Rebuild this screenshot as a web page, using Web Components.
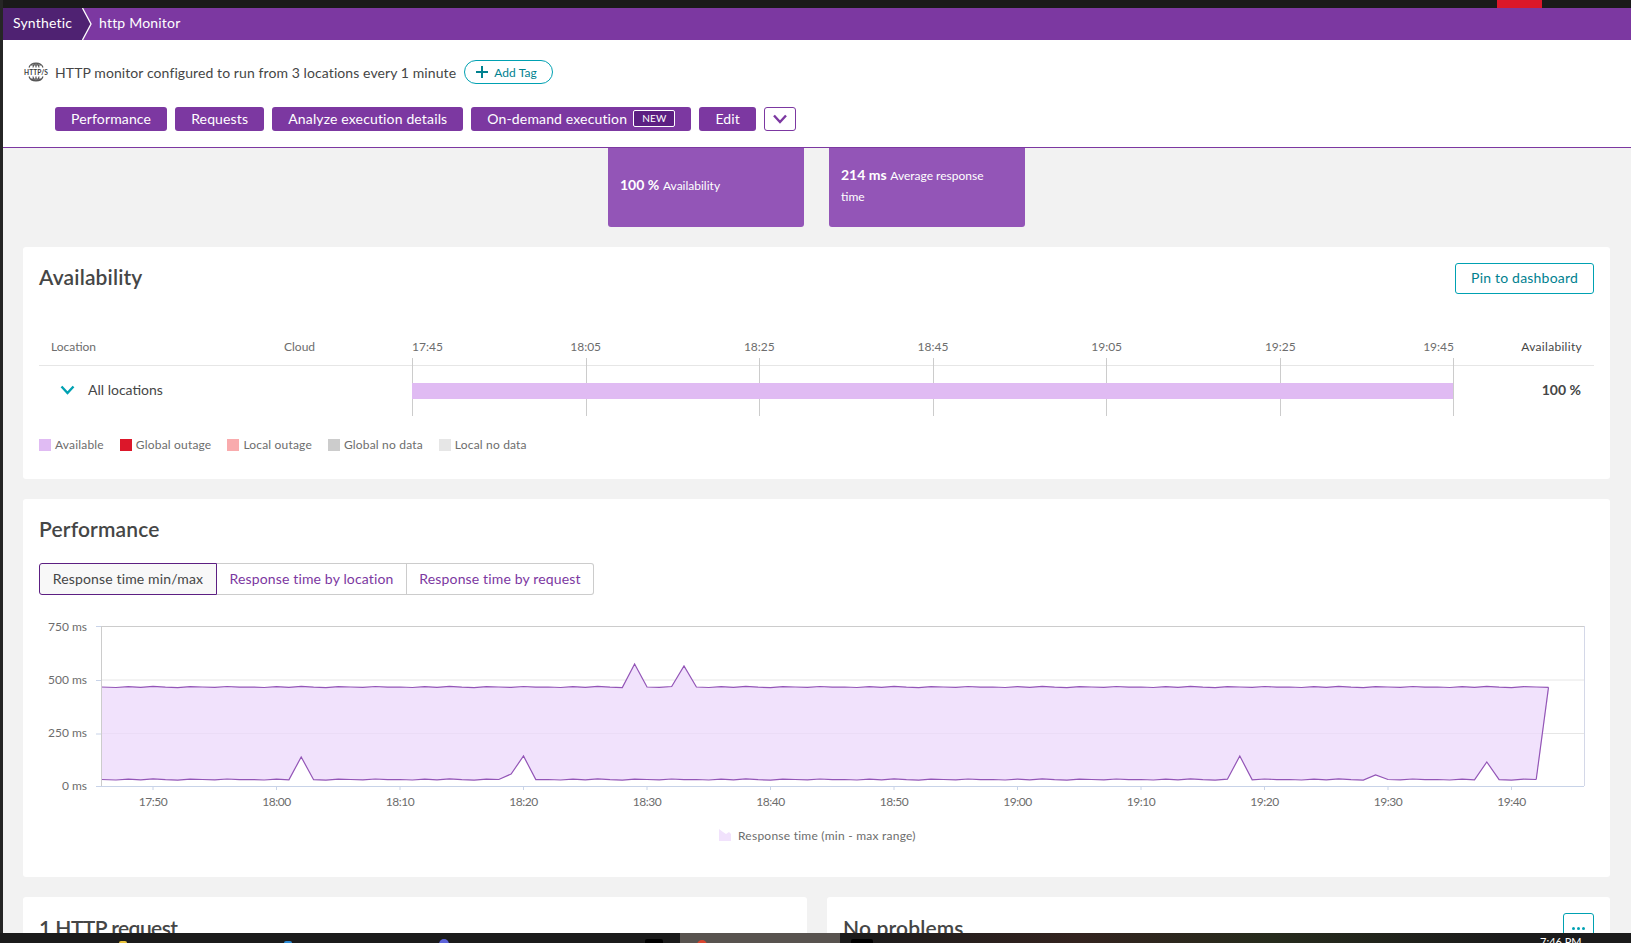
<!DOCTYPE html>
<html lang="en">
<head>
<meta charset="utf-8">
<title>http Monitor</title>
<style>
  html, body { margin: 0; height: 943px; overflow: hidden; background: #f2f2f2; }
  body { font-family: 'Lato', 'Liberation Sans', sans-serif; color: #454646; }
</style>
</head>
<body>
<mon-app></mon-app>

<script>
// Botón sólido de la cabecera
class MonButton extends HTMLElement {
  constructor() {
    super();
    this.attachShadow({ mode: 'open' }).innerHTML = `
      <style>
        :host { display: inline-flex; }
        .btn {
          display: flex; align-items: center; gap: 6px; box-sizing: border-box; height: 24px; padding: 0 16px 2px;
          background: #7c38a1; color: #fff; border-radius: 3px;
          font-size: 14px; letter-spacing: .15px; white-space: nowrap;
        }
      </style>
      <div class="btn"><slot></slot></div>`;
  }
}

class MonBreadcrumb extends HTMLElement {
  constructor() {
    super();
    this.attachShadow({ mode: 'open' }).innerHTML = `
      <style>
        :host { display: flex; height: 32px; background: #7c38a1; color: #fff; font-size: 14px; letter-spacing: .2px; }
        .first { display: flex; align-items: center; box-sizing: border-box; width: 79px; padding: 0 0 3px 10px; background: #4f2272; }
        .chev { display: block; width: 12px; height: 32px; margin-right: 5px; }
        .second { display: flex; align-items: center; padding-bottom: 3px; }
      </style>
      <div class="first"><slot name="root"></slot></div>
      <svg class="chev" viewBox="0 0 12 32">
        <path d="M0 0H1L9 16L1 32H0Z" fill="#4f2272"/>
        <path d="M0.500 0L9 16L0.500 32" fill="none" stroke="#fff" stroke-width="1.300"/>
      </svg>
      <div class="second"><slot></slot></div>`;
  }
}

class MonHeader extends HTMLElement {
  constructor() {
    super();
    this.attachShadow({ mode: 'open' }).innerHTML = `
      <style>
        :host { display: block; height: 107px; background: #fff; border-bottom: 1px solid #7c38a1; }
        .info { display: flex; align-items: center; height: 24px; padding: 20px 0 0 20px; font-size: 14px; letter-spacing: .09px; }
        .icon { width: 26px; height: 20px; margin-right: 6px; flex: none; }
        .tag {
          display: flex; align-items: center; gap: 5px; box-sizing: border-box; height: 24px; padding: 0 15px 0 10px;
          margin-left: 8px; border: 1px solid #00a1b2; border-radius: 12px; color: #00818f; font-size: 12px;
        }
        .tag svg { width: 14px; height: 14px; }
        .actions { display: flex; gap: 8px; margin: 23px 0 0 52px; }
        .more {
          display: flex; align-items: center; justify-content: center; box-sizing: border-box;
          width: 32px; height: 24px; border: 1px solid #7c38a1; border-radius: 3px;
        }
        .more svg { width: 16px; height: 10px; }
      </style>
      <div class="info">
        <svg class="icon" viewBox="0 0 26 20">
          <path d="M6 5.500C7 2.500 10 1 13 1S19 2.500 20 5.500M10 5.500C10.500 2.500 12 1 13 1S15.500 2.500 16 5.500M13 1V5.500M7.500 3H18.500" fill="none" stroke="#555" stroke-width="1.200"/>
          <path d="M6 14.500C7 17.500 10 19 13 19S19 17.500 20 14.500M10 14.500C10.500 17.500 12 19 13 19S15.500 17.500 16 14.500M13 19V14.500M7.500 17H18.500" fill="none" stroke="#555" stroke-width="1.200"/>
          <text x="13" y="12.700" text-anchor="middle" font-size="7.500" font-weight="700" fill="#3c3c3c" textLength="24" lengthAdjust="spacingAndGlyphs">HTTP/S</text>
        </svg>
        <slot></slot>
        <div class="tag">
          <svg viewBox="0 0 14 14"><path d="M7 1V13M1 7H13" stroke="#00818f" stroke-width="2"/></svg>
          Add Tag
        </div>
      </div>
      <div class="actions">
        <slot name="actions"></slot>
        <div class="more">
          <svg viewBox="0 0 16 10"><path d="M2 1.500L8 8L14 1.500" fill="none" stroke="#7c38a1" stroke-width="2.400"/></svg>
        </div>
      </div>`;
  }
}

class MonTile extends HTMLElement {
  constructor() {
    super();
    this.attachShadow({ mode: 'open' }).innerHTML = `
      <style>
        :host {
          display: block; box-sizing: border-box; width: 196px; height: 79px; padding: 16px 28px 0 12px;
          background: #9355b7; color: #fff; border-radius: 0 0 3px 3px; font-size: 12px; line-height: 21px;
        }
        :host([single]) { padding-top: 26px; }
        b { font-size: 14px; margin-right: 1px; }
      </style>
      <b>${this.getAttribute('value')}</b> <slot></slot>`;
  }
}

class MonCard extends HTMLElement {
  constructor() {
    super();
    this.attachShadow({ mode: 'open' }).innerHTML = `
      <style>
        :host { display: block; box-sizing: border-box; padding: 16px; background: #fff; border-radius: 3px; }
        .head { display: flex; align-items: flex-start; justify-content: space-between; min-height: 31px; }
        h2 { margin: 0; font-size: 21px; font-weight: 600; line-height: 28px; letter-spacing: .15px; color: #454646; }
      </style>
      <div class="head"><h2>${this.getAttribute('heading')}</h2><slot name="action"></slot></div>
      <slot></slot>`;
  }
}

class MonOutlineButton extends HTMLElement {
  constructor() {
    super();
    this.attachShadow({ mode: 'open' }).innerHTML = `
      <style>
        :host {
          display: flex; align-items: center; box-sizing: border-box; height: 31px; padding: 0 15px 2px;
          border: 1px solid #00a1b2; border-radius: 3px; color: #00818f; font-size: 14px; letter-spacing: .2px;
        }
      </style>
      <slot></slot>`;
  }
}

// Tabla de disponibilidad: cabecera, fila y leyenda
class MonAvailability extends HTMLElement {
  constructor() {
    super();
    const times = ['18:05', '18:25', '18:45', '19:05', '19:25'];
    const swatches = [
      ['#e0bbf3', 'Available'], ['#dc172a', 'Global outage'], ['#f9abad', 'Local outage'],
      ['#cccccc', 'Global no data'], ['#e6e6e6', 'Local no data']
    ];
    this.attachShadow({ mode: 'open' }).innerHTML = `
      <style>
        :host { display: block; margin-top: 35px; font-size: 12px; color: #6d6d6d; }
        .cols { display: grid; grid-template-columns: 373px 1042px 139px; }
        .thead { box-sizing: border-box; height: 37px; padding-bottom: 1px; border-bottom: 1px solid #e6e6e6; align-items: center; }
        .names { display: flex; padding-left: 12px; }
        .names span:first-child { width: 233px; }
        .labels { display: grid; grid-template-columns: repeat(6, 1fr); }
        .labels div { display: flex; justify-content: space-between; }
        .labels div span { transform: translateX(-50%); }
        .labels div:first-child span { transform: none; }
        .labels div:last-child span:last-child { transform: none; }
        .right { text-align: right; padding-right: 11px; letter-spacing: .3px; color: #454646; }
        .row { height: 50px; }
        .loc { display: flex; align-items: center; gap: 13px; padding: 0 0 3px 21px; font-size: 14px; color: #454646; }
        .loc svg { width: 15px; height: 10px; }
        .track { position: relative; display: grid; grid-template-columns: repeat(6, 1fr); height: 58px; margin-top: -8px; border-right: 1px solid #ccc; }
        .track i { border-left: 1px solid #ccc; }
        .bar { position: absolute; left: 0; right: 0; top: 25px; height: 16px; background: #e0bbf3; }
        .val { display: flex; align-items: center; justify-content: flex-end; padding: 0 12px 3px 0; font-size: 14px; font-weight: 700; color: #454646; }
        .legend { display: flex; gap: 16px; margin-top: 22px; letter-spacing: .18px; }
        .legend div { display: flex; align-items: center; gap: 4px; line-height: 14px; }
        .legend i { width: 12px; height: 12px; }
      </style>
      <div class="cols thead">
        <div class="names"><span>Location</span><span>Cloud</span></div>
        <div class="labels">
          <div><span>17:45</span></div>
          ${times.slice(0, 4).map(t => `<div><span>${t}</span></div>`).join('')}
          <div><span>19:25</span><span>19:45</span></div>
        </div>
        <div class="right">Availability</div>
      </div>
      <div class="cols row">
        <div class="loc">
          <svg viewBox="0 0 15 10"><path d="M1.500 1.500L7.500 8L13.500 1.500" fill="none" stroke="#00a1b2" stroke-width="2.400"/></svg>
          All locations
        </div>
        <div class="track"><i></i><i></i><i></i><i></i><i></i><i></i><div class="bar"></div></div>
        <div class="val">100 %</div>
      </div>
      <div class="legend">
        ${swatches.map(s => `<div><i style="background:${s[0]}"></i>${s[1]}</div>`).join('')}
      </div>`;
  }
}

class MonTabs extends HTMLElement {
  constructor() {
    super();
    this.attachShadow({ mode: 'open' }).innerHTML = `
      <style>
        :host { display: flex; width: 555px; height: 32px; margin-top: 17px; font-size: 14px; letter-spacing: .15px; color: #7c38a1; }
        div { display: flex; align-items: center; justify-content: center; box-sizing: border-box; height: 32px; padding-bottom: 1px; border: 1px solid #ccc; border-left: 0; }
        .on { width: 178px; background: #f8f8f8; color: #454646; border: 1px solid #5c1f82; border-radius: 3px 0 0 3px; }
        .b { width: 190px; }
        .c { width: 187px; border-radius: 0 3px 3px 0; }
      </style>
      <div class="on">Response time min/max</div>
      <div class="b">Response time by location</div>
      <div class="c">Response time by request</div>`;
  }
}

// Gráfica min/max dibujada en SVG, en coordenadas de página
class MonChart extends HTMLElement {
  connectedCallback() {
    const X0 = 276.5, PER_MIN = 12.35, LEFT = 101, RIGHT = 1584;
    const x = m => X0 + m * PER_MIN;
    // minutos relativos a las 18:00, sólo picos; el resto es ruido pequeño
    const topPeaks = { 29: 664, 33: 666, 109: 679 };
    const lowPeaks = { 2: 757, 19: 774, 20: 756, 78: 756, 89: 775, 98: 762 };
    const wobble = [0, .5, -.4, .3, -.6, .2, .6, -.3, 0, .4, -.5, .1];
    const top = [], low = [];
    for (let m = -14; m <= 103; m++) {
      const w = wobble[(m + 14) % 12];
      if (m < 103) low.push([x(m), lowPeaks[m] || 779.5 + w]);
      top.push([x(m), topPeaks[m] || 687 + w]);
    }
    top[0][0] = low[0][0] = LEFT;
    const pts = a => a.map(p => p[0].toFixed(1) + ',' + p[1].toFixed(1)).join(' ');
    const yTicks = [[626, 631, '750 ms'], [680, 684, '500 ms'], [733.500, 737, '250 ms'], [786, 790, '0 ms']];
    const xLabels = ['17:50', '18:00', '18:10', '18:20', '18:30', '18:40', '18:50', '19:00', '19:10', '19:20', '19:30', '19:40'];

    this.attachShadow({ mode: 'open' }).innerHTML = `
      <style>
        :host { display: block; margin-top: 15px; height: 250px; }
        svg { display: block; width: 1554px; height: 250px; }
        text { font-family: 'Lato', 'Liberation Sans', sans-serif; font-size: 12px; fill: #6d6d6d; }
        .tx { letter-spacing: -.5px; }
        .lg { letter-spacing: .24px; }
      </style>
      <svg viewBox="39 610 1554 250">
        <path d="M${LEFT} 626.500H${RIGHT}" stroke="#ccc"/>
        <path d="M${LEFT} 680H${RIGHT}" stroke="#e6e6e6"/>
        <polygon points="${pts(top)} ${pts(low.slice().reverse())}" fill="#f1e2fc"/>
        <path d="M${LEFT} 733.500H${RIGHT}" stroke="#ebdcf6"/>
        <path d="M1542 733.500H${RIGHT}" stroke="#e6e6e6"/>
        <polyline points="${pts(top)}" fill="none" stroke="#9355b7" stroke-width="1.200"/>
        <polyline points="${pts(low)}" fill="none" stroke="#9355b7" stroke-width="1.200"/>
        <polyline points="${pts(top.slice(-1))} ${pts(low.slice(-1))}" fill="none" stroke="#9355b7" stroke-width="1.200"/>
        <path d="M${LEFT}.500 626V786" stroke="#ccc"/>
        <path d="M${RIGHT}.500 626V786" stroke="#d4d8e8"/>
        <path d="M${LEFT} 786.500H${RIGHT}" stroke="#c8d3e8"/>
        ${yTicks.map(t => `<path d="M96 ${t[0] + .5}H${LEFT}" stroke="#c8d3e8"/><text x="87" y="${t[1]}" text-anchor="end">${t[2]}</text>`).join('')}
        ${xLabels.map((l, i) => {
          const tx = x(i * 10 - 10);
          return `<path d="M${tx} 786V790" stroke="#c8d3e8"/><text class="tx" x="${tx}" y="806" text-anchor="middle">${l}</text>`;
        }).join('')}
        <path d="M719 829L723 832L726 834L729 832L731 834V841H719Z" fill="#f1e2fc"/>
        <text class="lg" x="738" y="840">Response time (min - max range)</text>
      </svg>`;
  }
}

class MonPartialCard extends HTMLElement {
  constructor() {
    super();
    this.attachShadow({ mode: 'open' }).innerHTML = `
      <style>
        :host { display: block; position: relative; box-sizing: border-box; height: 120px; padding: 16px; background: #fff; border-radius: 3px; }
        h2 { margin: 0; font-size: 21px; font-weight: 600; line-height: 29px; letter-spacing: .15px; color: #454646; }
        .dots {
          position: absolute; top: 16px; right: 16px; display: flex; align-items: center; justify-content: center; gap: 2px;
          box-sizing: border-box; width: 31px; height: 31px; border: 1px solid #00a1b2; border-radius: 3px;
        }
        .dots i { width: 3px; height: 3px; background: #00a1b2; border-radius: 50%; }
        :host(:not([more])) .dots { display: none; }
      </style>
      <h2><slot></slot></h2>
      <div class="dots"><i></i><i></i><i></i></div>`;
  }
}

class MonTaskbar extends HTMLElement {
  constructor() {
    super();
    this.attachShadow({ mode: 'open' }).innerHTML = `
      <style>
        :host {
          position: absolute; left: 0; right: 0; top: 933px; height: 10px; overflow: hidden;
          background: linear-gradient(90deg, #1b1b1b 0 52%, #33231f 66%, #262b1c 78%, #1b1b1b 92%);
        }
        .active { position: absolute; left: 680px; width: 160px; top: 0; bottom: 0; background: #58534f; }
        i { position: absolute; top: 8px; width: 8px; height: 8px; border-radius: 2px; }
        .clock { position: absolute; left: 1540px; top: 2px; font-size: 11px; line-height: 14px; color: #fff; }
      </style>
      <div class="active"></div>
      <i style="left:119px;background:#e8c23a"></i>
      <i style="left:284px;background:#2a8ad4"></i>
      <i style="left:439px;background:#5c62d8;top:6px;border-radius:50%;width:10px;height:10px"></i>
      <i style="left:645px;top:6px;background:#000;width:18px"></i>
      <i style="left:697px;top:7px;background:#d8442f;border-radius:50%;width:10px;height:10px"></i>
      <i style="left:851px;top:6px;background:#000;width:22px"></i>
      <div class="clock">7:46 PM</div>`;
  }
}

class MonApp extends HTMLElement {
  constructor() {
    super();
    this.attachShadow({ mode: 'open' }).innerHTML = `
      <style>
        :host { display: block; height: 943px; box-sizing: border-box; border-left: 3px solid #262626; overflow: hidden; }
        .black { position: relative; height: 8px; background: #1a1a1a; margin-left: -3px; }
        .black i { position: absolute; left: 1497px; width: 45px; height: 8px; background: #dc172a; }
        .tiles { display: flex; justify-content: center; gap: 25px; }
        main { padding: 0 21px 0 20px; }
        .stack { display: flex; flex-direction: column; gap: 20px; margin-top: 20px; }
        .avail { height: 232px; }
        .perf { height: 378px; }
        .pair { display: grid; grid-template-columns: 784px 783px; gap: 20px; }
        .tight { letter-spacing: -.55px; }
      </style>
      <div class="black"><i></i></div>
      <mon-breadcrumb><span slot="root">Synthetic</span>http Monitor</mon-breadcrumb>
      <mon-header>
        HTTP monitor configured to run from 3 locations every 1 minute
        <mon-button slot="actions">Performance</mon-button>
        <mon-button slot="actions">Requests</mon-button>
        <mon-button slot="actions">Analyze execution details</mon-button>
        <mon-button slot="actions">On-demand execution <span style="display:flex;align-items:center;box-sizing:border-box;height:17px;padding:0 8px;border:1px solid #fff;border-radius:2px;background:#5c1f82;font-size:10px">NEW</span></mon-button>
        <mon-button slot="actions">Edit</mon-button>
      </mon-header>
      <main>
        <div class="tiles">
          <mon-tile value="100 %" single>Availability</mon-tile>
          <mon-tile value="214 ms">Average response time</mon-tile>
        </div>
        <div class="stack">
          <mon-card class="avail" heading="Availability">
            <mon-outline-button slot="action">Pin to dashboard</mon-outline-button>
            <mon-availability></mon-availability>
          </mon-card>
          <mon-card class="perf" heading="Performance">
            <mon-tabs></mon-tabs>
            <mon-chart></mon-chart>
          </mon-card>
          <div class="pair">
            <mon-partial-card><span class="tight">1 HTTP request</span></mon-partial-card>
            <mon-partial-card more>No problems</mon-partial-card>
          </div>
        </div>
      </main>
      <mon-taskbar></mon-taskbar>`;
  }
}

customElements.define('mon-button', MonButton);
customElements.define('mon-breadcrumb', MonBreadcrumb);
customElements.define('mon-header', MonHeader);
customElements.define('mon-tile', MonTile);
customElements.define('mon-card', MonCard);
customElements.define('mon-outline-button', MonOutlineButton);
customElements.define('mon-availability', MonAvailability);
customElements.define('mon-tabs', MonTabs);
customElements.define('mon-chart', MonChart);
customElements.define('mon-partial-card', MonPartialCard);
customElements.define('mon-taskbar', MonTaskbar);
customElements.define('mon-app', MonApp);
</script>
</body>
</html>
